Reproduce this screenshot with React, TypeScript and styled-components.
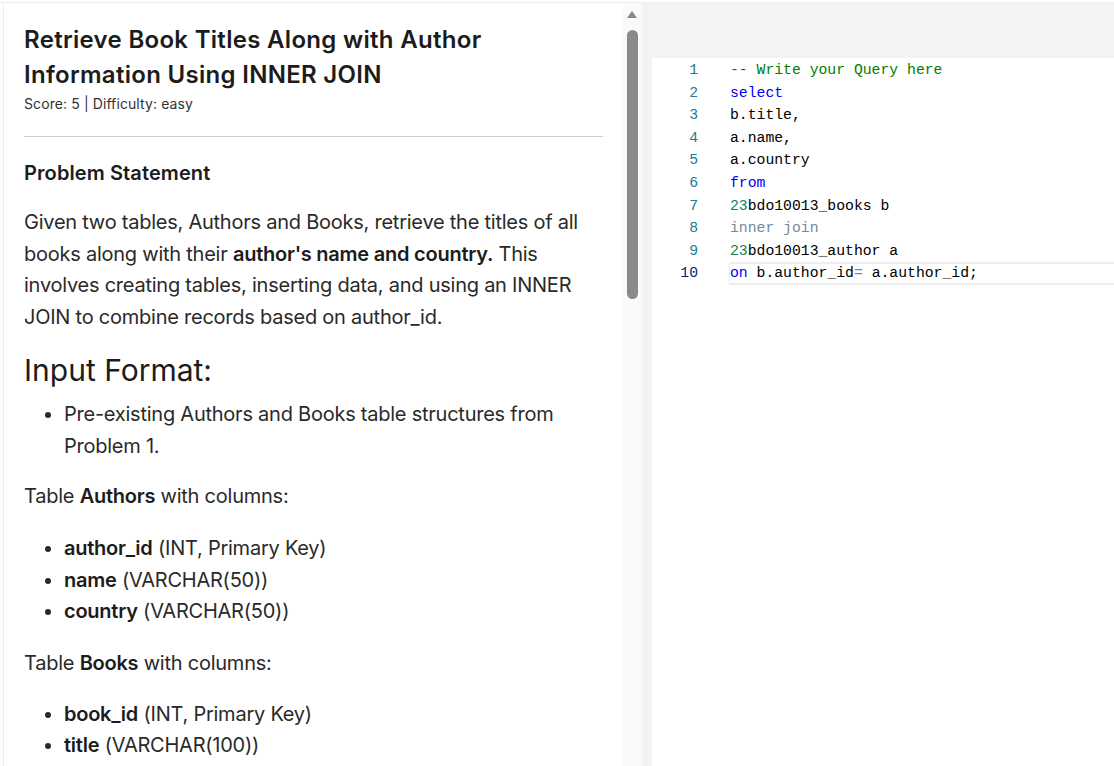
import React from 'react';
import styled, { createGlobalStyle } from 'styled-components';

const GlobalStyle = createGlobalStyle`
  html, body {
    margin: 0;
    padding: 0;
    background: #ffffff;
  }
  * {
    box-sizing: border-box;
  }
`;

const Page = styled.div`
  width: 1114px;
  height: 766px;
  padding-top: 2px;
  overflow: hidden;
`;

const Frame = styled.div`
  display: flex;
  height: 764px;
  border-top: 1px solid #ededed;
`;

const ProblemPane = styled.div`
  display: flex;
  width: 639px;
  margin-left: 3px;
  border-left: 1px solid #ededed;
  overflow: hidden;
`;

const ProblemContent = styled.div`
  flex: 1;
  padding: 19px 20px 0 20px;
  font-family: Inter, 'Noto Sans', sans-serif;
  color: #1c1c1c;
  overflow: hidden;
`;

const Title = styled.h1`
  margin: 0;
  font-size: 24px;
  line-height: 35px;
  font-weight: 600;
  letter-spacing: 0.3px;
`;

const Meta = styled.div`
  margin-top: 2px;
  font-size: 14px;
  line-height: 20px;
  color: #333;
  letter-spacing: 0.1px;
`;

const Divider = styled.hr`
  margin: 22px 0 22px;
  border: none;
  border-top: 1px solid #cfcfcf;
`;

const SectionTitle = styled.h3`
  margin: 0;
  font-size: 20px;
  line-height: 28px;
  font-weight: 600;
  letter-spacing: 0.1px;
`;

const Paragraph = styled.p<{ $gap?: number }>`
  margin: ${(p) => p.$gap ?? 19}px 0 0;
  font-size: 20px;
  line-height: 31.7px;
  letter-spacing: -0.24px;
  color: #2a2a2a;

  b {
    font-weight: 600;
    color: #1c1c1c;
  }
`;

const Heading = styled.h2`
  margin: 16px 0 0;
  font-size: 30px;
  line-height: 40px;
  font-weight: 400;
  letter-spacing: 0;
`;

const List = styled.ul<{ $gap?: number }>`
  margin: ${(p) => p.$gap ?? 20}px 0 0;
  padding-left: 40px;
  font-size: 20px;
  line-height: 31.7px;
  letter-spacing: -0.24px;
  color: #2a2a2a;

  b {
    font-weight: 600;
    color: #1c1c1c;
  }
`;

const ScrollTrack = styled.div`
  position: relative;
  width: 19px;
  flex-shrink: 0;
  background: #fafafa;
`;

const ScrollArrow = styled.div`
  position: absolute;
  top: 8px;
  left: 4px;
  width: 0;
  height: 0;
  border-left: 5.5px solid transparent;
  border-right: 5.5px solid transparent;
  border-bottom: 7px solid #8a8a8a;
`;

const ScrollThumb = styled.div`
  position: absolute;
  top: 27px;
  left: 4px;
  width: 11px;
  height: 269px;
  border-radius: 6px;
  background: #8a8a8a;
`;

const EditorPane = styled.div`
  flex: 1;
  display: flex;
  flex-direction: column;
  background: #f3f3f3;
  padding: 55px 0 0 10px;
`;

const Editor = styled.div`
  flex: 1;
  background: #ffffff;
  padding-top: 1px;
  font-family: 'Liberation Mono', 'DejaVu Sans Mono', monospace;
  font-size: 14.75px;
`;

const CodeLine = styled.div`
  display: flex;
  height: 22.6px;
  line-height: 22.6px;
`;

const LineNo = styled.div<{ $active?: boolean }>`
  width: 46px;
  margin-right: 31px;
  text-align: right;
  color: ${(p) => (p.$active ? '#0b216f' : '#237893')};
  flex-shrink: 0;
`;

const LineText = styled.div<{ $active?: boolean }>`
  flex: 1;
  white-space: pre;
  color: #000000;
  border: 2px solid ${(p) => (p.$active ? '#eeeeee' : 'transparent')};
  border-left-width: 1px;
  border-right: none;
  line-height: 18.6px;
`;

const Tok = styled.span<{ $kind: 'comment' | 'kw' | 'num' | 'op' | 'plain' }>`
  color: ${(p) =>
    ({
      comment: '#008000',
      kw: '#0000ff',
      num: '#098658',
      op: '#778899',
      plain: '#000000',
    })[p.$kind]};
`;

type Token = ['comment' | 'kw' | 'num' | 'op' | 'plain', string];

const code: Token[][] = [
  [['comment', '-- Write your Query here']],
  [['kw', 'select']],
  [['plain', 'b.title,']],
  [['plain', 'a.name,']],
  [['plain', 'a.country']],
  [['kw', 'from']],
  [['num', '23'], ['plain', 'bdo10013_books b']],
  [['op', 'inner join']],
  [['num', '23'], ['plain', 'bdo10013_author a']],
  [['kw', 'on'], ['plain', ' b.author_id'], ['op', '='], ['plain', ' a.author_id;']],
];

const App = () => {
  return (
    <Page>
      <GlobalStyle />
      <Frame>
        <ProblemPane>
          <ProblemContent>
            <Title>
              Retrieve Book Titles Along with Author
              <br />
              Information Using INNER JOIN
            </Title>
            <Meta>Score: 5 | Difficulty: easy</Meta>
            <Divider />
            <SectionTitle>Problem Statement</SectionTitle>
            <Paragraph $gap={20}>
              Given two tables, Authors and Books, retrieve the titles of all books along with their{' '}
              <b>author's name and country.</b> This involves creating tables, inserting data, and
              using an INNER JOIN to combine records based on author_id.
            </Paragraph>
            <Heading>Input Format:</Heading>
            <List $gap={9}>
              <li>Pre-existing Authors and Books table structures from Problem 1.</li>
            </List>
            <Paragraph>
              Table <b>Authors</b> with columns:
            </Paragraph>
            <List>
              <li>
                <b>author_id</b> (INT, Primary Key)
              </li>
              <li>
                <b>name</b> (VARCHAR(50))
              </li>
              <li>
                <b>country</b> (VARCHAR(50))
              </li>
            </List>
            <Paragraph $gap={20}>
              Table <b>Books</b> with columns:
            </Paragraph>
            <List $gap={19}>
              <li>
                <b>book_id</b> (INT, Primary Key)
              </li>
              <li>
                <b>title</b> (VARCHAR(100))
              </li>
            </List>
          </ProblemContent>
          <ScrollTrack>
            <ScrollArrow />
            <ScrollThumb />
          </ScrollTrack>
        </ProblemPane>
        <EditorPane>
          <Editor>
            {code.map((tokens, i) => (
              <CodeLine key={i}>
                <LineNo $active={i === code.length - 1}>{i + 1}</LineNo>
                <LineText $active={i === code.length - 1}>
                  {tokens.map(([kind, text], j) => (
                    <Tok key={j} $kind={kind}>
                      {text}
                    </Tok>
                  ))}
                </LineText>
              </CodeLine>
            ))}
          </Editor>
        </EditorPane>
      </Frame>
    </Page>
  );
};

export default App;
